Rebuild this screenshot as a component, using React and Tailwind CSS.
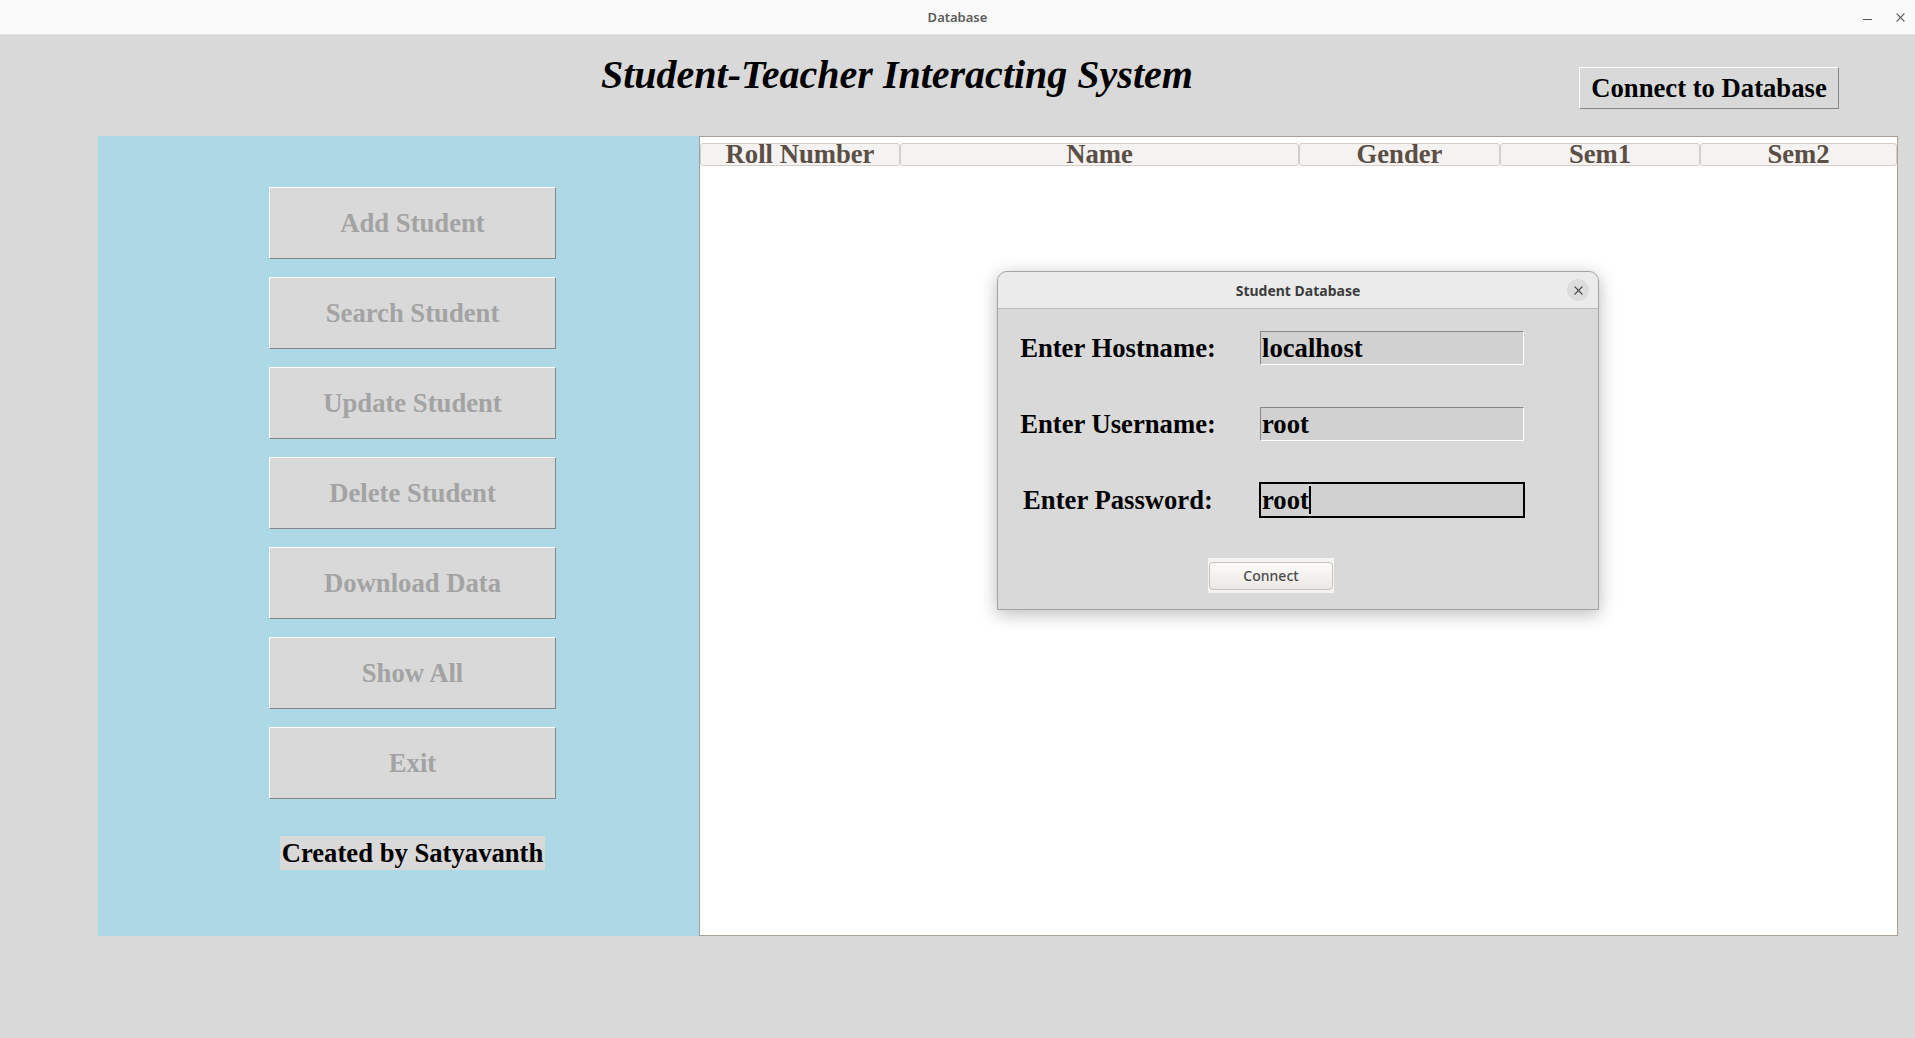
// App.jsx
// Tk-style "Database" window — side menu, student table, connect dialog on top

const serif = { fontFamily: '"Liberation Serif", "Times New Roman", serif' };
const ui = { fontFamily: '"Noto Sans", "DejaVu Sans", sans-serif' };

const menuItems = [
  'Add Student',
  'Search Student',
  'Update Student',
  'Delete Student',
  'Download Data',
  'Show All',
  'Exit'
];

// column widths taken from the header cells
const columns = [
  { label: 'Roll Number', w: 'w-[200px]' },
  { label: 'Name',        w: 'w-[399px]' },
  { label: 'Gender',      w: 'w-[201px]' },
  { label: 'Sem1',        w: 'w-[200px]' },
  { label: 'Sem2',        w: 'w-[197px]' }
];

const fields = [
  { label: 'Enter Hostname:', value: 'localhost' },
  { label: 'Enter Username:', value: 'root' },
  { label: 'Enter Password:', value: 'root', focused: true }
];

// Raised Tk button look
const MenuButton = ({ children }) => (
  <div className="w-[287px] h-[72px] flex items-center justify-center bg-[#d9d9d9] border border-t-white border-l-white border-b-[#858585] border-r-[#858585] text-[26.67px] font-bold text-[#a3a3a3]"
       style={serif}>
    {children}
  </div>
);

const Entry = ({ value, focused }) => (
  <div className={`w-[266px] h-[36px] border ${focused ? 'border-black' : 'border-transparent'}`}>
    <div className={`h-[34px] flex items-center pl-[1px] bg-[#d1d1d1] border ${focused
      ? 'border-black'
      : 'border-t-[#878787] border-l-[#878787] border-b-white border-r-white'}`}>
      <span className="text-[26.67px] leading-[30px] font-bold text-black" style={serif}>{value}</span>
      {focused && <span className="w-[2px] h-[28px] bg-black" />}
    </div>
  </div>
);

const ConnectDialog = () => (
  <div className="absolute left-[997px] top-[271px] w-[602px] flex flex-col rounded-t-[10px] border border-[#a3a3a3] bg-[#d9d9d9] shadow-[0_4px_18px_rgba(0,0,0,0.28)] overflow-hidden">
    {/* dialog title bar */}
    <div className="relative h-[37px] flex items-center justify-center bg-[#ebebeb] border-b border-[#bdbdbd]">
      <span className="text-[14px] font-bold text-[#3c3c3c]" style={ui}>Student Database</span>
      <div className="absolute right-[9px] top-[7px] w-[22px] h-[22px] rounded-full bg-[#dcdcdc] flex items-center justify-center">
        <svg width="9" height="9" viewBox="0 0 10 10" stroke="#3a3a3a" strokeWidth="1.3" strokeLinecap="round">
          <line x1="1" y1="1" x2="9" y2="9" />
          <line x1="9" y1="1" x2="1" y2="9" />
        </svg>
      </div>
    </div>

    {/* form body */}
    <div className="flex flex-col gap-[40px] pt-[21px] pb-[16px]">
      {fields.map((f) => (
        <div key={f.label} className="flex items-center h-[36px]">
          <span className="w-[200px] ml-[20px] text-center text-[26.67px] leading-[30px] font-bold text-black whitespace-nowrap" style={serif}>
            {f.label}
          </span>
          <div className="ml-[41px]">
            <Entry value={f.value} focused={f.focused} />
          </div>
        </div>
      ))}
      <div className="flex">
        <div className="ml-[210px] w-[126px] h-[35px] bg-[#f3f3f3] flex items-center justify-center">
          <div className="w-[124px] h-[28px] rounded-[4px] border border-[#c9c1b9] bg-gradient-to-b from-[#fcfcfb] to-[#ebe7e4] flex items-center justify-center text-[14px] font-medium text-[#4a4a4a]"
               style={ui}>
            Connect
          </div>
        </div>
      </div>
    </div>
  </div>
);

export default function App() {
  return (
    <div className="relative w-full h-screen flex flex-col bg-[#d9d9d9] overflow-hidden">
      {/* window title bar */}
      <div className="h-[35px] flex-shrink-0 flex items-center justify-center relative bg-[#fafafa] border-b border-[#e2e2e2]">
        <span className="text-[13px] font-semibold text-[#5a5a5a] mt-[2px]" style={ui}>Database</span>
        <div className="absolute right-[10px] top-0 h-[35px] flex items-center gap-[24px]">
          <span className="w-[9px] h-[1.5px] bg-[#555] mt-[4px]" />
          <svg width="9" height="9" viewBox="0 0 10 10" stroke="#555" strokeWidth="1.3" strokeLinecap="round">
            <line x1="1" y1="1" x2="9" y2="9" />
            <line x1="9" y1="1" x2="1" y2="9" />
          </svg>
        </div>
      </div>

      {/* heading + connect button */}
      <div className="h-[101px] flex-shrink-0 flex items-start">
        <h1 className="ml-[601px] mt-[17px] text-[40px] leading-[46px] font-bold italic text-black whitespace-nowrap" style={serif}>
          Student-Teacher Interacting System
        </h1>
        <div className="ml-auto mr-[76px] mt-[32px] w-[260px] h-[42px] flex items-center justify-center bg-[#d9d9d9] border border-t-white border-l-white border-b-[#858585] border-r-[#858585] text-[26.67px] font-bold text-black"
             style={serif}>
          Connect to Database
        </div>
      </div>

      {/* content */}
      <div className="h-[800px] flex-shrink-0 flex ml-[98px] mr-[17px]">
        {/* side menu */}
        <div className="w-[601px] flex-shrink-0 bg-[#add8e6] flex flex-col pl-[171px] pt-[51px]">
          <div className="flex flex-col gap-[18px]">
            {menuItems.map((m) => <MenuButton key={m}>{m}</MenuButton>)}
          </div>
          <div className="mt-[37px] w-[287px] flex justify-center">
            <span className="h-[34px] px-[2px] leading-[34px] bg-[#d9d9d9] text-[26.67px] font-bold text-black whitespace-nowrap" style={serif}>
              Created by Satyavanth
            </span>
          </div>
        </div>

        {/* table */}
        <div className="flex-1 bg-white border border-[#a89f96] pt-[6px]">
          <div className="flex h-[23px]">
            {columns.map((c) => (
              <div key={c.label}
                   className={`${c.w} h-[23px] flex justify-center bg-[#f4f3f1] border border-[#d5cec6] rounded-[3px] text-[26.67px] leading-[21px] font-bold text-[#5b4e45]`}
                   style={serif}>
                {c.label}
              </div>
            ))}
          </div>
        </div>
      </div>

      <ConnectDialog />
    </div>
  );
}
